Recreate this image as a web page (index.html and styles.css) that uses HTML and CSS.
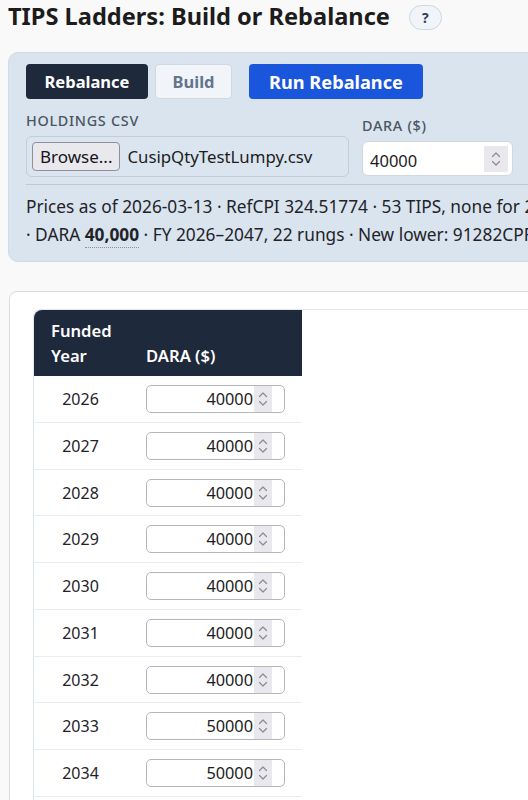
FILE: index.html
```html
<!DOCTYPE html>
<html lang="en">
<head>
<meta charset="utf-8">
<title>TIPS Ladders</title>
<link rel="stylesheet" href="styles.css">
</head>
<body>
<header class="title-row">
  <h1 class="title">TIPS Ladders: Build or Rebalance</h1>
  <button class="help" type="button">?</button>
</header>

<section class="panel">
  <div class="actions">
    <button class="btn btn-dark" type="button">Rebalance</button>
    <button class="btn btn-light" type="button">Build</button>
    <button class="btn btn-blue" type="button">Run Rebalance</button>
  </div>
  <div class="fields">
    <div class="field field-file">
      <label class="label">HOLDINGS CSV</label>
      <div class="filebox">
        <span class="browse">Browse...</span>
        <span class="filename">CusipQtyTestLumpy.csv</span>
      </div>
    </div>
    <div class="field field-dara">
      <label class="label">DARA ($)</label>
      <div class="numbox numbox-top">
        <input class="num-input" type="text" value="40000">
        <span class="spin spin-top">
          <svg viewBox="0 0 12 20" width="12" height="20"><path d="M2.5 7.5 L6 4 L9.5 7.5 M2.5 12.5 L6 16 L9.5 12.5" fill="none" stroke="#8a8a93" stroke-width="1.2" stroke-linecap="round" stroke-linejoin="round"/></svg>
        </span>
      </div>
    </div>
  </div>
  <div class="summary">
    <div class="line">Prices as of 2026-03-13 · RefCPI 324.51774 · 53 TIPS, none for 2040 · Holdings 18 CUSIPs</div>
    <div class="line">· DARA <b class="dotted">40,000</b> · FY 2026–2047, 22 rungs · New lower: 91282CPF5 · Upper 2040</div>
  </div>
</section>

<section class="card">
  <div class="table-wrap">
    <table class="ladder">
      <thead>
        <tr><th class="c-year">Funded<br>Year</th><th class="c-dara">DARA ($)</th></tr>
      </thead>
      <tbody id="rows">
        <tr><td class="c-year">2026</td><td class="c-dara"><div class="numbox numbox-row"><input class="row-input" type="text" value="40000"><span class="spin spin-row"><svg viewBox="0 0 12 20" width="12" height="20"><path d="M2.5 7.5 L6 4 L9.5 7.5 M2.5 12.5 L6 16 L9.5 12.5" fill="none" stroke="#8a8a93" stroke-width="1.2" stroke-linecap="round" stroke-linejoin="round"/></svg></span></div></td></tr>
        <tr><td class="c-year">2027</td><td class="c-dara"><div class="numbox numbox-row"><input class="row-input" type="text" value="40000"><span class="spin spin-row"><svg viewBox="0 0 12 20" width="12" height="20"><path d="M2.5 7.5 L6 4 L9.5 7.5 M2.5 12.5 L6 16 L9.5 12.5" fill="none" stroke="#8a8a93" stroke-width="1.2" stroke-linecap="round" stroke-linejoin="round"/></svg></span></div></td></tr>
        <tr><td class="c-year">2028</td><td class="c-dara"><div class="numbox numbox-row"><input class="row-input" type="text" value="40000"><span class="spin spin-row"><svg viewBox="0 0 12 20" width="12" height="20"><path d="M2.5 7.5 L6 4 L9.5 7.5 M2.5 12.5 L6 16 L9.5 12.5" fill="none" stroke="#8a8a93" stroke-width="1.2" stroke-linecap="round" stroke-linejoin="round"/></svg></span></div></td></tr>
        <tr><td class="c-year">2029</td><td class="c-dara"><div class="numbox numbox-row"><input class="row-input" type="text" value="40000"><span class="spin spin-row"><svg viewBox="0 0 12 20" width="12" height="20"><path d="M2.5 7.5 L6 4 L9.5 7.5 M2.5 12.5 L6 16 L9.5 12.5" fill="none" stroke="#8a8a93" stroke-width="1.2" stroke-linecap="round" stroke-linejoin="round"/></svg></span></div></td></tr>
        <tr><td class="c-year">2030</td><td class="c-dara"><div class="numbox numbox-row"><input class="row-input" type="text" value="40000"><span class="spin spin-row"><svg viewBox="0 0 12 20" width="12" height="20"><path d="M2.5 7.5 L6 4 L9.5 7.5 M2.5 12.5 L6 16 L9.5 12.5" fill="none" stroke="#8a8a93" stroke-width="1.2" stroke-linecap="round" stroke-linejoin="round"/></svg></span></div></td></tr>
        <tr><td class="c-year">2031</td><td class="c-dara"><div class="numbox numbox-row"><input class="row-input" type="text" value="40000"><span class="spin spin-row"><svg viewBox="0 0 12 20" width="12" height="20"><path d="M2.5 7.5 L6 4 L9.5 7.5 M2.5 12.5 L6 16 L9.5 12.5" fill="none" stroke="#8a8a93" stroke-width="1.2" stroke-linecap="round" stroke-linejoin="round"/></svg></span></div></td></tr>
        <tr><td class="c-year">2032</td><td class="c-dara"><div class="numbox numbox-row"><input class="row-input" type="text" value="40000"><span class="spin spin-row"><svg viewBox="0 0 12 20" width="12" height="20"><path d="M2.5 7.5 L6 4 L9.5 7.5 M2.5 12.5 L6 16 L9.5 12.5" fill="none" stroke="#8a8a93" stroke-width="1.2" stroke-linecap="round" stroke-linejoin="round"/></svg></span></div></td></tr>
        <tr><td class="c-year">2033</td><td class="c-dara"><div class="numbox numbox-row"><input class="row-input" type="text" value="50000"><span class="spin spin-row"><svg viewBox="0 0 12 20" width="12" height="20"><path d="M2.5 7.5 L6 4 L9.5 7.5 M2.5 12.5 L6 16 L9.5 12.5" fill="none" stroke="#8a8a93" stroke-width="1.2" stroke-linecap="round" stroke-linejoin="round"/></svg></span></div></td></tr>
        <tr><td class="c-year">2034</td><td class="c-dara"><div class="numbox numbox-row"><input class="row-input" type="text" value="50000"><span class="spin spin-row"><svg viewBox="0 0 12 20" width="12" height="20"><path d="M2.5 7.5 L6 4 L9.5 7.5 M2.5 12.5 L6 16 L9.5 12.5" fill="none" stroke="#8a8a93" stroke-width="1.2" stroke-linecap="round" stroke-linejoin="round"/></svg></span></div></td></tr>
        <tr><td class="c-year">2035</td><td class="c-dara"><div class="numbox numbox-row"><input class="row-input" type="text" value="50000"><span class="spin spin-row"><svg viewBox="0 0 12 20" width="12" height="20"><path d="M2.5 7.5 L6 4 L9.5 7.5 M2.5 12.5 L6 16 L9.5 12.5" fill="none" stroke="#8a8a93" stroke-width="1.2" stroke-linecap="round" stroke-linejoin="round"/></svg></span></div></td></tr>
      </tbody>
    </table>
  </div>
</section>
</body>
</html>
```

FILE: styles.css
```css
html, body {
  margin: 0;
  padding: 0;
  overflow: hidden;
}
body {
  background: #f9f9fa;
  font-family: "Noto Sans", "Open Sans", sans-serif;
  color: #1f2328;
  padding: 0 8px;
  width: 900px;
}
.title-row {
  display: flex;
  align-items: center;
  gap: 19px;
  height: 30px;
  padding-top: 1px;
}
.title {
  margin: 0;
  font-size: 23.6px;
  font-weight: 700;
  color: #1c1c1c;
  line-height: 28px;
}
.help {
  width: 33px;
  height: 25px;
  border-radius: 13px;
  border: 1px solid #cdd7e3;
  background: #f1f5f9;
  color: #334155;
  font-family: "Noto Sans", sans-serif;
  font-weight: 700;
  font-size: 14px;
  padding: 0;
  margin-top: 2px;
}
.panel {
  margin-top: 21px;
  background: #d9e4ef;
  border: 1px solid #cfdbe7;
  border-radius: 10px;
  padding: 11px 18px 12px 17px;
  width: 760px;
}
.actions {
  display: flex;
  gap: 7px;
  align-items: center;
}
.btn {
  font-family: "Noto Sans", sans-serif;
  font-weight: 700;
  font-size: 16.5px;
  height: 35px;
  border-radius: 4px;
  padding: 0 10px;
  border: 1px solid transparent;
}
.btn-dark {
  background: #1e293b;
  color: #fff;
  width: 122px;
}
.btn-light {
  background: #f1f5f9;
  color: #64748b;
  border-color: #cfd8e3;
  width: 77px;
}
.btn-blue {
  background: #1a56db;
  color: #fff;
  width: 174px;
  margin-left: 10px;
  font-size: 18.2px;
}
.fields {
  display: flex;
  align-items: flex-end;
  gap: 13px;
  margin-top: 12px;
  padding-bottom: 7px;
  border-bottom: 1px solid #bccad8;
}
.field {
  display: flex;
  flex-direction: column;
}
.label {
  font-size: 14.4px;
  letter-spacing: 0.7px;
  color: #4b5563;
  font-weight: 500;
  line-height: 20px;
  margin-bottom: 5px;
}
.filebox {
  width: 316px;
  height: 39px;
  border: 1px solid #c3ccd7;
  border-radius: 6px;
  background: #dbe5f0;
  display: flex;
  align-items: center;
  padding-left: 5px;
  gap: 7px;
}
.browse {
  display: inline-flex;
  align-items: center;
  height: 27px;
  padding: 0 7px;
  border: 1px solid #8f8f9d;
  border-radius: 4px;
  background: #e9e9ed;
  font-size: 17px;
  color: #15141a;
}
.filename {
  font-size: 16.8px;
  color: #1c1c1c;
}
.numbox {
  display: flex;
  align-items: center;
  background: #fff;
  box-sizing: border-box;
}
.numbox-top {
  width: 151px;
  height: 35px;
  border: 1px solid #d0d7df;
  border-radius: 6px;
  padding: 0 4px 0 7px;
  margin-bottom: 1px;
}
.num-input {
  border: 0;
  outline: none;
  background: transparent;
  font-family: "Noto Sans", sans-serif;
  font-size: 16.5px;
  color: #1c1c1c;
  width: 100%;
  min-width: 0;
  padding: 0;
  margin-top: 3px;
}
.spin {
  display: flex;
  align-items: center;
  justify-content: center;
  background: #e9e9ed;
  flex: none;
}
.spin-top {
  width: 24px;
  height: 26px;
}
.summary {
  padding-top: 8px;
  font-size: 17.3px;
  line-height: 28px;
  color: #1f2328;
  white-space: nowrap;
}
.dotted {
  font-weight: 700;
  border-bottom: 1px dotted #8a8f98;
  padding-bottom: 1px;
}
.card {
  margin-top: 29px;
  margin-left: 1px;
  background: #fff;
  border: 1px solid #dcdcdc;
  border-radius: 8px;
  padding: 17px 0 0 23px;
  width: 860px;
  height: 600px;
}
.table-wrap {
  border-top: 1px solid #dfe7f0;
  border-left: 1px solid #dfe7f0;
  border-top-left-radius: 8px;
}
.ladder {
  border-collapse: collapse;
  font-size: 16px;
}
.ladder th {
  background: #1e293b;
  color: #fff;
  font-weight: 600;
  font-size: 16.6px;
  text-align: left;
  vertical-align: bottom;
  line-height: 25px;
  padding: 8px 16px 8px 17px;
}
.ladder th.c-year {
  width: 62px;
  border-top-left-radius: 8px;
}
.ladder th.c-dara {
  width: 140px;
  padding-left: 17px;
}
.ladder td {
  border-bottom: 1px solid #e8edf3;
  padding: 9px 16px 8.75px 17px;
  height: 28px;
}
.ladder td.c-year {
  text-align: center;
  color: #1f2328;
  padding-left: 14px;
  padding-right: 16px;
}
.numbox-row {
  width: 139px;
  height: 28px;
  border: 1px solid #b5b5bb;
  border-radius: 5px;
  padding-right: 12px;
}
.row-input {
  border: 0;
  outline: none;
  background: transparent;
  font-family: "Noto Sans", sans-serif;
  font-size: 16.3px;
  color: #1c1c1c;
  text-align: right;
  width: 100%;
  min-width: 0;
  padding: 0 1px 0 0;
}
.spin-row {
  width: 18px;
  height: 26px;
}
```
